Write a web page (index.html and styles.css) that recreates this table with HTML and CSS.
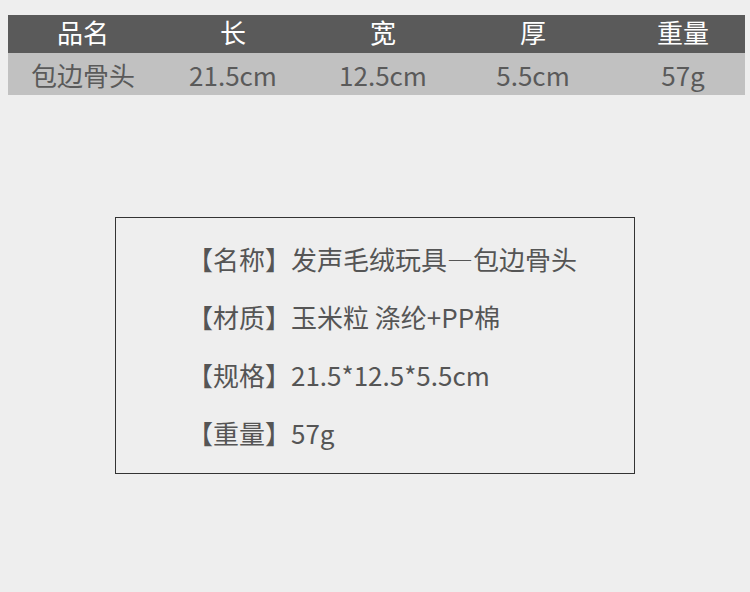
FILE: index.html
```html
<!DOCTYPE html>
<html lang="zh-CN">
<head>
<meta charset="utf-8">
<link rel="stylesheet" href="styles.css">
</head>
<body>
<div class="page">
  <div class="table">
    <div class="row head">
      <div class="cell">品名</div>
      <div class="cell">长</div>
      <div class="cell">宽</div>
      <div class="cell">厚</div>
      <div class="cell last">重量</div>
    </div>
    <div class="row body">
      <div class="cell">包边骨头</div>
      <div class="cell">21.5cm</div>
      <div class="cell">12.5cm</div>
      <div class="cell">5.5cm</div>
      <div class="cell last">57g</div>
    </div>
  </div>
  <div class="box">
    <p class="line">【名称】发声毛绒玩具—包边骨头</p>
    <p class="line">【材质】玉米粒 涤纶+PP棉</p>
    <p class="line">【规格】21.5*12.5*5.5cm</p>
    <p class="line">【重量】57g</p>
  </div>
</div>
</body>
</html>
```
FILE: styles.css
```css
html, body {
  margin: 0;
  padding: 0;
  background: #eeeeee;
}
body {
  font-family: "Noto Sans CJK SC", "Noto Sans", sans-serif;
  width: 750px;
  height: 592px;
  overflow: hidden;
}
.page {
  padding: 15px 5px 0 8px;
}
.table {
  width: 737px;
}
.row {
  display: grid;
  grid-template-columns: repeat(4, 150px) 137px;
}
.cell {
  text-align: center;
  white-space: nowrap;
}
.cell.last {
  margin-right: -13px;
}
.head {
  background: #5a5a5a;
  color: #ffffff;
  height: 38px;
  font-size: 26px;
  line-height: 34px;
  font-weight: 400;
}
.body {
  background: #c1c1c1;
  color: #5a5a5a;
  height: 42px;
  font-size: 26px;
  line-height: 44px;
}
.box {
  margin: 122px 0 0 107px;
  width: 520px;
  height: 257px;
  border: 1px solid #333333;
  padding: 12px 0 0 0;
  box-sizing: border-box;
}
.line {
  margin: 0;
  padding-left: 71px;
  font-size: 26px;
  line-height: 58px;
  color: #555555;
  white-space: nowrap;
}
```
